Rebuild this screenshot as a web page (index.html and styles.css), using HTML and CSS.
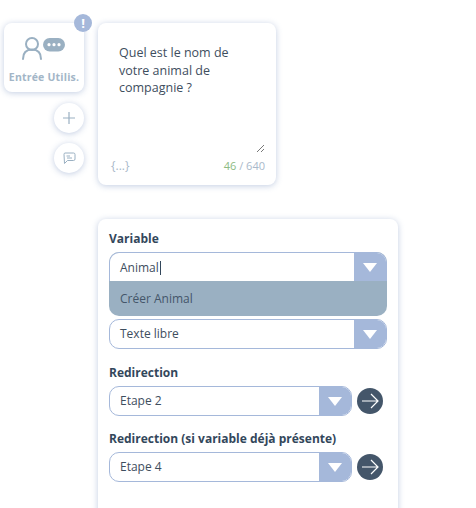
FILE: index.html
```html
<!DOCTYPE html>
<html lang="fr">
<head>
    <meta charset="UTF-8">
    <title>Entrée Utilisateur</title>
    <link rel="stylesheet" href="styles.css">
</head>
<body>
    <div class="top-row">
        <div class="step-col">
            <div class="step-card">
                <span class="step-badge">!</span>
                <svg class="step-icon" width="60" height="32" viewBox="0 0 60 32">
                    <circle cx="18" cy="13" r="6" fill="none" stroke="#9ab0c2" stroke-width="2"/>
                    <path d="M9 28 C9 21 13 18.5 18 18.5 C23 18.5 27 21 27 28" fill="none" stroke="#9ab0c2" stroke-width="2" stroke-linecap="round"/>
                    <rect x="29" y="7" width="22" height="13.5" rx="6.7" fill="#9ab0c2"/>
                    <circle cx="35" cy="13.7" r="1.6" fill="#fff"/>
                    <circle cx="40" cy="13.7" r="1.6" fill="#fff"/>
                    <circle cx="45" cy="13.7" r="1.6" fill="#fff"/>
                </svg>
                <div class="step-name">Entrée Utilis.</div>
            </div>
            <div class="round-btn round-add">
                <svg width="14" height="14" viewBox="0 0 14 14">
                    <path d="M7 1 V13 M1 7 H13" stroke="#9ab0c2" stroke-width="1.2" fill="none"/>
                </svg>
            </div>
            <div class="round-btn round-comment">
                <svg width="14" height="14" viewBox="0 0 14 14">
                    <path d="M3 2 H11.5 Q13 2 13 3.5 V8 Q13 9.5 11.5 9.5 H5.5 L2.5 12.5 L2 3.5 Q2 2 3 2 Z" stroke="#9ab0c2" stroke-width="1" fill="none" stroke-linejoin="round"/>
                    <path d="M4.5 5 H8 M5 7 H10" stroke="#9ab0c2" stroke-width="1" fill="none"/>
                </svg>
            </div>
        </div>

        <div class="message-card">
            <p class="message-text">Quel est le nom de votre animal de compagnie ?</p>
            <svg class="resize-grip" width="9" height="9" viewBox="0 0 9 9">
                <path d="M1 8 L8 1 M5 8 L8 5" stroke="#555" stroke-width="0.8" fill="none"/>
            </svg>
            <div class="message-foot">
                <span class="foot-vars">{...}</span>
                <span><span class="count-used">46</span> / 640</span>
            </div>
        </div>
    </div>

    <div class="settings-card">
        <div class="field-label">Variable</div>
        <div class="combo">
            <div class="select select-open">
                <span class="select-value">Animal<span class="caret"></span></span>
                <span class="select-arrow"></span>
            </div>
            <div class="combo-option">Créer Animal</div>
        </div>
        <div class="select select-type">
            <span class="select-value">Texte libre</span>
            <span class="select-arrow"></span>
        </div>

        <div class="field-label label-redirect">Redirection</div>
        <div class="select-row">
            <div class="select">
                <span class="select-value">Etape 2</span>
                <span class="select-arrow"></span>
            </div>
            <div class="go-btn">
                <svg width="26" height="26" viewBox="0 0 26 26">
                    <path d="M5 13 H21 M14 6 L21 13 L14 20" stroke="#fff" stroke-width="1.2" fill="none"/>
                </svg>
            </div>
        </div>

        <div class="field-label label-redirect-alt">Redirection (si variable déjà présente)</div>
        <div class="select-row">
            <div class="select">
                <span class="select-value">Etape 4</span>
                <span class="select-arrow"></span>
            </div>
            <div class="go-btn">
                <svg width="26" height="26" viewBox="0 0 26 26">
                    <path d="M5 13 H21 M14 6 L21 13 L14 20" stroke="#fff" stroke-width="1.2" fill="none"/>
                </svg>
            </div>
        </div>
    </div>
</body>
</html>
```

FILE: styles.css
```css
html, body {
    height: 100%;
    overflow: hidden;
}
body {
    margin: 0;
    padding: 23px 0 0 4px;
    box-sizing: border-box;
    background-color: #fff;
    font-family: "Open Sans", sans-serif;
    font-size: 12px;
    color: #3e4e5e;
}
.top-row {
    display: flex;
    align-items: flex-start;
    gap: 14px;
}
.step-col {
    width: 80px;
    display: flex;
    flex-direction: column;
    align-items: flex-end;
}
.step-card {
    position: relative;
    width: 80px;
    height: 69px;
    background-color: #fff;
    border-radius: 8px;
    box-shadow: 0 1px 6px rgba(120, 145, 190, 0.45);
    text-align: center;
}
.step-badge {
    position: absolute;
    top: -9px;
    right: -8px;
    width: 18px;
    height: 18px;
    border-radius: 50%;
    background-color: #a5b8da;
    color: #fff;
    font-size: 13px;
    font-weight: 700;
    line-height: 18px;
}
.step-icon {
    display: block;
    margin: 8px auto 0;
}
.step-name {
    margin-top: 7px;
    font-size: 10.5px;
    font-weight: 700;
    letter-spacing: 0.2px;
    color: #a3b6c7;
    white-space: nowrap;
}
.round-btn {
    width: 30px;
    height: 30px;
    border-radius: 50%;
    background-color: #fff;
    box-shadow: 0 1px 6px rgba(120, 145, 190, 0.45);
    display: flex;
    align-items: center;
    justify-content: center;
}
.round-add {
    margin-top: 11px;
}
.round-comment {
    margin-top: 10px;
}
.message-card {
    position: relative;
    width: 178px;
    height: 162px;
    box-sizing: border-box;
    padding: 21px 36px 0 21px;
    background-color: #fff;
    border-radius: 8px;
    box-shadow: 0 1px 6px rgba(120, 145, 190, 0.45);
}
.message-text {
    margin: 0;
    font-size: 12.5px;
    line-height: 17.5px;
    color: #3e4e5e;
}
.resize-grip {
    position: absolute;
    right: 11px;
    bottom: 32px;
}
.message-foot {
    position: absolute;
    left: 13px;
    right: 11px;
    bottom: 12px;
    display: flex;
    justify-content: space-between;
    font-size: 11px;
    color: #a9b9ca;
}
.foot-vars {
    font-size: 12px;
    line-height: 15px;
}
.count-used {
    color: #8dbb83;
}
.settings-card {
    width: 300px;
    height: 300px;
    box-sizing: border-box;
    margin: 34px 0 0 94px;
    padding: 11px 11px 0;
    background-color: #fff;
    border-radius: 8px;
    box-shadow: 0 1px 6px rgba(120, 145, 190, 0.45);
}
.field-label {
    font-size: 12px;
    font-weight: 700;
    line-height: 17px;
    color: #33475b;
}
.combo {
    margin-top: 5px;
    border-radius: 10px;
    overflow: hidden;
    background-color: #9ab0c2;
}
.select {
    flex: 1;
    display: flex;
    height: 30px;
    box-sizing: border-box;
    border: 1px solid #a5b8da;
    border-radius: 10px;
    background-color: #fff;
    overflow: hidden;
}
.select-open {
    border-bottom: none;
    border-radius: 10px 10px 0 0;
    height: 29px;
}
.select-open .select-value {
    line-height: 29px;
}
.select-type {
    margin-top: 3px;
}
.select-value {
    flex: 1;
    padding-left: 10px;
    line-height: 28px;
    font-size: 12px;
    color: #3e4e5e;
}
.caret {
    display: inline-block;
    width: 1px;
    height: 14px;
    margin-left: 1px;
    vertical-align: -3px;
    background-color: #33475b;
}
.select-arrow {
    position: relative;
    width: 32px;
    background-color: #a5b8da;
}
.select-arrow::after {
    content: "";
    position: absolute;
    left: 9px;
    top: 10px;
    border-left: 7px solid transparent;
    border-right: 7px solid transparent;
    border-top: 9px solid #fff;
}
.combo-option {
    height: 35px;
    padding-left: 11px;
    line-height: 35px;
    color: #44566a;
}
.label-redirect {
    margin-top: 15px;
}
.label-redirect-alt {
    margin-top: 14px;
}
.select-row {
    display: flex;
    align-items: center;
    gap: 5px;
    margin-top: 5px;
    padding-right: 4px;
}
.go-btn {
    width: 26px;
    height: 26px;
    border-radius: 50%;
    background-color: #44566a;
}
.go-btn svg {
    display: block;
}
```
